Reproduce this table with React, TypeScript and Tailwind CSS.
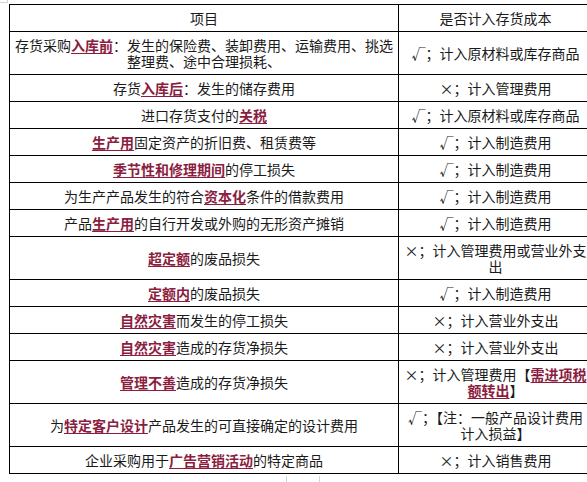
import type { ReactNode } from "react";

const L = ({ children }: { children: ReactNode }) => (
  <span className="font-bold text-[#8b1d3f] underline decoration-[#8b1d3f] underline-offset-2">
    {children}
  </span>
);

const rows: [ReactNode, ReactNode][] = [
  [
    <>
      存货采购<L>入库前</L>：发生的保险费、装卸费用、运输费用、挑选整理费、途中合理损耗、
    </>,
    "√；计入原材料或库存商品",
  ],
  [
    <>
      存货<L>入库后</L>：发生的储存费用
    </>,
    "×；计入管理费用",
  ],
  [
    <>
      进口存货支付的<L>关税</L>
    </>,
    "√；计入原材料或库存商品",
  ],
  [
    <>
      <L>生产用</L>固定资产的折旧费、租赁费等
    </>,
    "√；计入制造费用",
  ],
  [
    <>
      <L>季节性和修理期间</L>的停工损失
    </>,
    "√；计入制造费用",
  ],
  [
    <>
      为生产产品发生的符合<L>资本化</L>条件的借款费用
    </>,
    "√；计入制造费用",
  ],
  [
    <>
      产品<L>生产用</L>的自行开发或外购的无形资产摊销
    </>,
    "√；计入制造费用",
  ],
  [
    <>
      <L>超定额</L>的废品损失
    </>,
    "×；计入管理费用或营业外支出",
  ],
  [
    <>
      <L>定额内</L>的废品损失
    </>,
    "√；计入制造费用",
  ],
  [
    <>
      <L>自然灾害</L>而发生的停工损失
    </>,
    "×；计入营业外支出",
  ],
  [
    <>
      <L>自然灾害</L>造成的存货净损失
    </>,
    "×；计入营业外支出",
  ],
  [
    <>
      <L>管理不善</L>造成的存货净损失
    </>,
    <>
      ×；计入管理费用【<L>需进项税额转出</L>】
    </>,
  ],
  [
    <>
      为<L>特定客户设计</L>产品发生的可直接确定的设计费用
    </>,
    "√；【注：一般产品设计费用计入损益】",
  ],
  [
    <>
      企业采购用于<L>广告营销活动</L>的特定商品
    </>,
    "×；计入销售费用",
  ],
];

const cell = "border border-black px-[4px] py-[5px] text-center align-middle";

export default function App() {
  return (
    <div
      className="relative h-[482px] w-full overflow-hidden bg-white text-[14px] leading-[16px] text-[#1a1a1a]"
      style={{ fontFamily: '"Noto Sans CJK SC", "Noto Sans", sans-serif' }}
    >
      {/* faint frame corner left over from the screenshot */}
      <div className="absolute left-0 top-0 h-[3px] w-[8px] border-b border-r border-gray-300" />

      <table className="ml-[9px] mt-[4px] w-[583px] table-fixed border-collapse">
        <colgroup>
          <col className="w-[389px]" />
          <col className="w-[194px]" />
        </colgroup>
        <thead>
          <tr>
            <th className={`${cell} font-normal`}>项目</th>
            <th className={`${cell} font-normal`}>是否计入存货成本</th>
          </tr>
        </thead>
        <tbody>
          {rows.map(([item, result], i) => (
            <tr key={i}>
              <td className={cell}>{item}</td>
              <td className={cell}>{result}</td>
            </tr>
          ))}
        </tbody>
      </table>

      <div className="ml-[286px] mt-[2px] h-[8px] w-[34px] border-x border-gray-300" />
    </div>
  );
}
